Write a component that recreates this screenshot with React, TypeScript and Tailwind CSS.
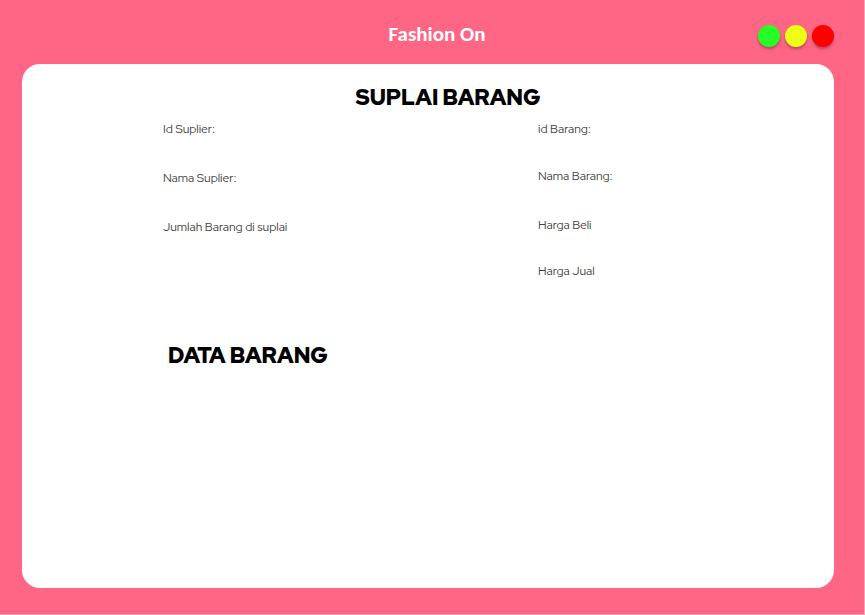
const supplierFields = ["Id Suplier:", "Nama Suplier:", "Jumlah Barang di suplai"];
const itemFields = ["id Barang:", "Nama Barang:", "Harga Beli", "Harga Jual"];

function WindowButton({ label, color }: { label: string; color: string }) {
  return (
    <button
      type="button"
      aria-label={label}
      className={`size-[22px] rounded-full shadow-[0_2px_3px_rgba(0,0,0,0.3)] ${color}`}
    />
  );
}

function FieldList({ fields, rows }: { fields: string[]; rows: string }) {
  return (
    <ul className={`grid content-start text-[12px] leading-4 font-normal text-[#444444] ${rows}`}>
      {fields.map((field) => (
        <li key={field}>{field}</li>
      ))}
    </ul>
  );
}

export default function App() {
  return (
    <div className="flex min-h-screen flex-col border-r border-b border-[#ffa3b5] bg-[#ff6685] font-['Red_Hat_Display','Inter',sans-serif]">
      <header className="grid h-16 shrink-0 grid-cols-[1fr_auto_1fr] items-center pt-2 pr-[30px] pl-10">
        <h1 className="col-start-2 pb-1 font-['Carlito','Noto_Sans',sans-serif] text-[21px] leading-6 font-bold text-white">
          Fashion On
        </h1>
        <div className="flex justify-end gap-[5px]">
          <WindowButton label="Minimize" color="bg-[#26ff26]" />
          <WindowButton label="Maximize" color="bg-[#eeff11]" />
          <WindowButton label="Close" color="bg-[#ff0000]" />
        </div>
      </header>

      <main className="mr-[30px] mb-[26px] ml-[22px] grow rounded-[18px] bg-white pt-5 pr-[101px] pl-[141px]">
        <section>
          <h2 className="text-center text-[22px] leading-7 font-black text-black">SUPLAI BARANG</h2>
          <div className="mt-[9px] grid grid-cols-[25fr_13fr]">
            <FieldList fields={supplierFields} rows="auto-rows-[49px]" />
            <FieldList fields={itemFields} rows="grid-rows-[47px_49px_46px_46px]" />
          </div>
        </section>
        <section className="mt-[33px] pl-[5px]">
          <h2 className="text-[22px] leading-7 font-black text-black">DATA BARANG</h2>
        </section>
      </main>
    </div>
  );
}
